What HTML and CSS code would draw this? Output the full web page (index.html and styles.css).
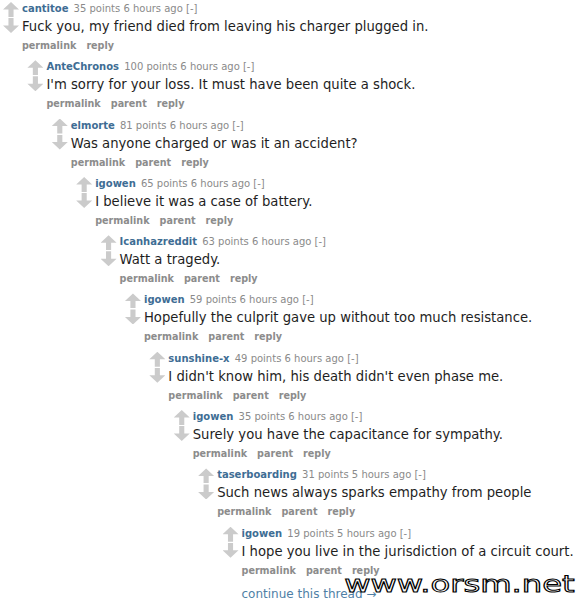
FILE: index.html
```html
<!DOCTYPE html>
<html lang="en">
  <head>
    <meta charset="UTF-8" />
    <title>Comment thread</title>
    <link rel="stylesheet" href="styles.css">
  </head>
  <body>
    <div class="thread">
      <div class="comment">
        <div class="arrows"><span class="up"></span><span class="down"></span></div>
        <div class="entry">
          <p class="tagline"><a class="author">cantitoe</a> 35 points 6 hours ago [-]</p>
          <p class="md">Fuck you, my friend died from leaving his charger plugged in.</p>
          <p class="buttons"><a>permalink</a><a>reply</a></p>

          <div class="comment">
            <div class="arrows"><span class="up"></span><span class="down"></span></div>
            <div class="entry">
              <p class="tagline"><a class="author">AnteChronos</a> 100 points 6 hours ago [-]</p>
              <p class="md">I'm sorry for your loss. It must have been quite a shock.</p>
              <p class="buttons"><a>permalink</a><a>parent</a><a>reply</a></p>

              <div class="comment">
                <div class="arrows"><span class="up"></span><span class="down"></span></div>
                <div class="entry">
                  <p class="tagline"><a class="author">elmorte</a> 81 points 6 hours ago [-]</p>
                  <p class="md">Was anyone charged or was it an accident?</p>
                  <p class="buttons"><a>permalink</a><a>parent</a><a>reply</a></p>

                  <div class="comment">
                    <div class="arrows"><span class="up"></span><span class="down"></span></div>
                    <div class="entry">
                      <p class="tagline"><a class="author">igowen</a> 65 points 6 hours ago [-]</p>
                      <p class="md">I believe it was a case of battery.</p>
                      <p class="buttons"><a>permalink</a><a>parent</a><a>reply</a></p>

                      <div class="comment">
                        <div class="arrows"><span class="up"></span><span class="down"></span></div>
                        <div class="entry">
                          <p class="tagline"><a class="author">Icanhazreddit</a> 63 points 6 hours ago [-]</p>
                          <p class="md">Watt a tragedy.</p>
                          <p class="buttons"><a>permalink</a><a>parent</a><a>reply</a></p>

                          <div class="comment">
                            <div class="arrows"><span class="up"></span><span class="down"></span></div>
                            <div class="entry">
                              <p class="tagline"><a class="author">igowen</a> 59 points 6 hours ago [-]</p>
                              <p class="md">Hopefully the culprit gave up without too much resistance.</p>
                              <p class="buttons"><a>permalink</a><a>parent</a><a>reply</a></p>

                              <div class="comment">
                                <div class="arrows"><span class="up"></span><span class="down"></span></div>
                                <div class="entry">
                                  <p class="tagline"><a class="author">sunshine-x</a> 49 points 6 hours ago [-]</p>
                                  <p class="md">I didn't know him, his death didn't even phase me.</p>
                                  <p class="buttons"><a>permalink</a><a>parent</a><a>reply</a></p>

                                  <div class="comment">
                                    <div class="arrows"><span class="up"></span><span class="down"></span></div>
                                    <div class="entry">
                                      <p class="tagline"><a class="author">igowen</a> 35 points 6 hours ago [-]</p>
                                      <p class="md">Surely you have the capacitance for sympathy.</p>
                                      <p class="buttons"><a>permalink</a><a>parent</a><a>reply</a></p>

                                      <div class="comment">
                                        <div class="arrows"><span class="up"></span><span class="down"></span></div>
                                        <div class="entry">
                                          <p class="tagline"><a class="author">taserboarding</a> 31 points 5 hours ago [-]</p>
                                          <p class="md">Such news always sparks empathy from people</p>
                                          <p class="buttons"><a>permalink</a><a>parent</a><a>reply</a></p>

                                          <div class="comment">
                                            <div class="arrows"><span class="up"></span><span class="down"></span></div>
                                            <div class="entry">
                                              <p class="tagline"><a class="author">igowen</a> 19 points 5 hours ago [-]</p>
                                              <p class="md">I hope you live in the jurisdiction of a circuit court.</p>
                                              <p class="buttons"><a>permalink</a><a>parent</a><a>reply</a></p>
                                              <p class="more">continue this thread &rarr;</p>
                                            </div>
                                          </div>
                                        </div>
                                      </div>
                                    </div>
                                  </div>
                                </div>
                              </div>
                            </div>
                          </div>
                        </div>
                      </div>
                    </div>
                  </div>
                </div>
              </div>
            </div>
          </div>
        </div>
      </div>
    </div>

    <div class="watermark">www.orsm.net</div>
  </body>
</html>
```

FILE: styles.css
```css
body {
  margin: 0;
  background: #fff;
  font-family: "DejaVu Sans", Verdana, sans-serif;
  overflow: hidden;
}

.thread {
  padding: 2px 0 0 3px;
}

p {
  margin: 0;
}

.comment {
  display: flex;
}

.comment .comment {
  margin-top: 6.3px;
  margin-left: 5.4px;
}

.arrows {
  width: 19px;
  flex: none;
  display: flex;
  flex-direction: column;
}

.up,
.down {
  display: block;
  width: 16px;
  height: 15px;
  background: #cbcbcb;
}

.up {
  clip-path: polygon(50% 0, 100% 50%, 66% 50%, 66% 100%, 34% 100%, 34% 50%, 0 50%);
}

.down {
  margin-top: 1px;
  clip-path: polygon(34% 0, 66% 0, 66% 50%, 100% 50%, 50% 100%, 0 50%, 34% 50%);
}

.entry {
  flex: 1;
}

.tagline {
  font-size: 10px;
  line-height: 14px;
  color: #8a8a8a;
}

.author {
  color: #3e6d94;
  font-weight: bold;
  margin-right: 2px;
}

.md {
  padding-top: 1px;
  font-size: 13.2px;
  line-height: 20px;
  color: #1e1e1e;
}

.buttons {
  margin-top: 1px;
  font-size: 9.6px;
  line-height: 16px;
  font-weight: bold;
  color: #8c8c8c;
}

.buttons a {
  margin-right: 10px;
}

.more {
  margin-top: 6px;
  font-size: 12px;
  line-height: 18px;
  color: #4f7fa6;
}

.watermark {
  position: absolute;
  right: 2px;
  bottom: 4px;
  font-family: "DejaVu Sans", sans-serif;
  font-size: 23px;
  line-height: 23px;
  color: #fff;
  -webkit-text-stroke: 1px #000;
  transform: scaleX(1.4);
  transform-origin: right center;
}
```
